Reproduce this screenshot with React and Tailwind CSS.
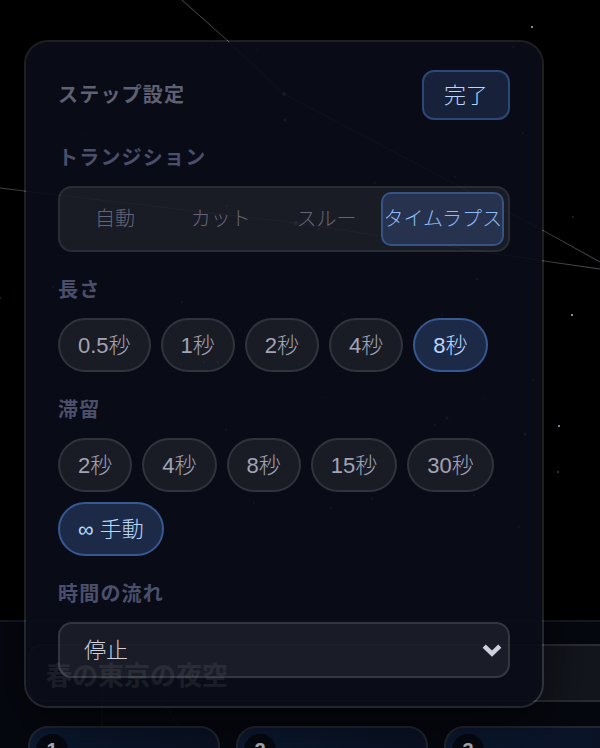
import { useState } from "react";

const STARS = [
  [532, 27, 1, "#e8b890"], [523, 133, 1.2, "#8a8a80"], [573, 217, 0.7, "#56607a"],
  [572, 315, 0.9, "#e4e4e8"], [559, 426, 1.1, "#b4c8f4"], [558, 472, 0.8, "#c08850"],
  [211, 47, 0.8, "#8a8a80"], [257, 50, 0.8, "#8a8a80"], [284, 94, 2, "#b0a898"],
  [285, 120, 1.4, "#a0a0a0"], [86, 134, 0.8, "#8a8a80"], [138, 81, 0.6, "#777777"],
  [296, 223, 2.2, "#b8a890"], [227, 206, 1.1, "#a08080"], [319, 229, 1.2, "#a08080"],
  [513, 47, 0.9, "#999999"], [375, 183, 0.9, "#999999"], [455, 177, 0.9, "#888888"],
  [53, 287, 0.9, "#888888"], [182, 302, 1.1, "#999999"], [174, 333, 0.8, "#888888"],
  [204, 362, 0.9, "#999999"], [218, 362, 1.2, "#999999"], [477, 279, 1.1, "#999999"],
  [344, 314, 0.9, "#999999"], [442, 315, 0.9, "#999999"], [533, 380, 1, "#999999"],
  [484, 398, 0.8, "#777777"], [447, 418, 1.6, "#999999"], [435, 425, 1, "#888888"],
  [525, 434, 1.4, "#999999"], [474, 495, 1, "#999999"], [372, 499, 1.2, "#888888"],
  [331, 508, 1, "#888888"], [519, 527, 1, "#888888"], [226, 430, 0.9, "#888888"],
  [254, 503, 1, "#888888"], [0, 298, 1, "#5a2010"], [326, 397, 0.8, "#888888"],
];

function Sky() {
  return (
    <svg
      className="absolute left-0 top-0"
      width="600"
      height="748"
      viewBox="0 0 600 748"
      aria-hidden="true"
    >
      <g fill="none" stroke="#62666c" strokeWidth="0.8">
        <path d="M182 0 L228 41 L284 94 L544 231 L600 262" />
        <path d="M0 188 L24 191 L296 223 L544 261 L600 269" />
        <path d="M102 680 V740 M150 680 L190 744" />
      </g>
      {STARS.map(([x, y, r, color]) => (
        <circle key={`${x}-${y}`} cx={x} cy={y} r={r} fill={color} />
      ))}
    </svg>
  );
}

function Label({ id, htmlFor, children }) {
  const Tag = htmlFor ? "label" : "h3";
  return (
    <Tag
      id={id}
      htmlFor={htmlFor}
      className="text-[20px] font-semibold leading-7 tracking-[0.06em] text-[#4b4f6c]"
    >
      {children}
    </Tag>
  );
}

function Pills({ id, title, options, value, onChange }) {
  return (
    <section className="flex flex-col gap-3.5">
      <Label id={id}>{title}</Label>
      <div role="group" aria-labelledby={id} className="flex flex-wrap gap-2.5">
        {options.map((option) => (
          <button
            key={option}
            type="button"
            aria-pressed={option === value}
            onClick={() => onChange(option)}
            className={
              option === value
                ? "h-[54px] rounded-full border-2 border-[#365893] bg-[#1d2a47] px-[18px] text-[22px] font-light text-[#b9d7fb]"
                : "h-[54px] rounded-full border-2 border-white/10 bg-white/[0.065] px-[18px] text-[22px] font-light text-[#a3a3b6]"
            }
          >
            {option}
          </button>
        ))}
      </div>
    </section>
  );
}

const MODES = ["自動", "カット", "スルー", "タイムラプス"];

function StepSettings() {
  const [mode, setMode] = useState("タイムラプス");
  const [length, setLength] = useState("8秒");
  const [hold, setHold] = useState("∞ 手動");

  return (
    <div
      role="dialog"
      aria-labelledby="step-title"
      className="absolute bottom-10 left-6 right-14 flex flex-col gap-6 rounded-3xl border-2 border-white/[0.12] bg-[#0a0d18]/[0.92] bg-clip-padding px-8 py-7 shadow-[0_16px_60px_rgba(0,0,0,0.6)]"
    >
      <header className="flex items-center justify-between">
        <h2
          id="step-title"
          className="text-[20px] font-semibold leading-7 tracking-[0.06em] text-[#5f6074]"
        >
          ステップ設定
        </h2>
        <button
          type="button"
          className="h-[50px] rounded-xl border-2 border-[#2d4878] bg-[#18213a] px-5 text-[22px] font-light text-[#b9d7fb]"
        >
          完了
        </button>
      </header>

      <section className="flex flex-col gap-3.5">
        <Label id="mode-label">トランジション</Label>
        <div
          role="group"
          aria-labelledby="mode-label"
          className="flex gap-1 rounded-[14px] border-2 border-white/[0.07] bg-white/[0.065] p-1"
        >
          {MODES.map((item) => (
            <button
              key={item}
              type="button"
              aria-pressed={item === mode}
              onClick={() => setMode(item)}
              className={
                item === mode
                  ? "h-[54px] flex-none whitespace-nowrap rounded-[10px] border-2 border-[#365385] bg-[#27324e] text-[20px] font-light text-[#8cbcf8]"
                  : "h-[54px] min-w-0 flex-1 whitespace-nowrap rounded-[10px] text-[20px] font-light text-[#666475]"
              }
            >
              {item}
            </button>
          ))}
        </div>
      </section>

      <Pills
        id="length-label"
        title="長さ"
        options={["0.5秒", "1秒", "2秒", "4秒", "8秒"]}
        value={length}
        onChange={setLength}
      />
      <Pills
        id="hold-label"
        title="滞留"
        options={["2秒", "4秒", "8秒", "15秒", "30秒", "∞ 手動"]}
        value={hold}
        onChange={setHold}
      />

      <section className="flex flex-col gap-3.5">
        <Label htmlFor="time-flow">時間の流れ</Label>
        <div className="relative">
          <select
            id="time-flow"
            className="block h-14 w-full appearance-none rounded-[14px] border-2 border-white/[0.12] bg-white/[0.065] px-6 text-[22px] font-light text-[#cfcfdd]"
          >
            <option>停止</option>
            <option>再生</option>
          </select>
          <svg
            className="pointer-events-none absolute right-2 top-[22px]"
            width="20"
            height="14"
            viewBox="0 0 20 14"
            aria-hidden="true"
          >
            <path d="M2.2 2.2 L10 9.6 L17.8 2.2" fill="none" stroke="#cfcfe0" strokeWidth="4.6" />
          </svg>
        </div>
      </section>
    </div>
  );
}

function Timeline() {
  return (
    <footer className="relative h-32 flex-none overflow-hidden border-t-2 border-[#171923] bg-[#070912]/90 px-7 pt-[22px]">
      <input
        type="text"
        aria-label="タイトル"
        defaultValue="春の東京の夜空"
        className="-mr-10 block h-[58px] w-[calc(100%+64px)] rounded-[14px] border-2 border-white/10 bg-white/[0.06] px-4 text-[26px] font-semibold text-[#e6e6f0]"
      />
      <ol className="mt-6 flex gap-4">
        {[1, 2, 3].map((step) => (
          <li
            key={step}
            className="h-32 w-48 flex-none rounded-[20px] border-2 border-[#25272e] bg-linear-to-r from-[#0c1a33] to-[#0a1224] px-1.5 pt-1.5"
          >
            <span className="flex size-8 items-center justify-center rounded-full bg-[#060912] text-[20px] font-bold text-[#b8bac4]">
              {step}
            </span>
          </li>
        ))}
      </ol>
    </footer>
  );
}

export default function App() {
  return (
    <main className="relative flex h-screen flex-col justify-end overflow-hidden bg-black font-['Liberation_Sans','Noto_Sans_CJK_JP',sans-serif]">
      <Sky />
      <Timeline />
      <StepSettings />
    </main>
  );
}
